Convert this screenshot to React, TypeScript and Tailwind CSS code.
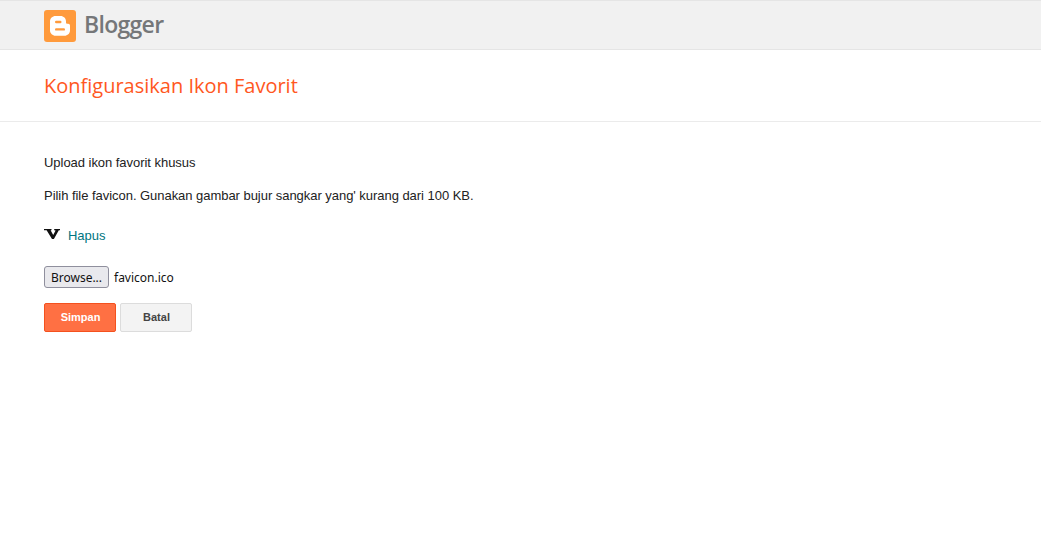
export default function App() {
  return (
    <div className="min-h-[554px] bg-white font-['Liberation_Sans',Arial,sans-serif] text-[13px] tracking-[-0.04px] text-[#222]">
      {/* Header */}
      <div className="flex h-[50px] items-center gap-[8px] border-y border-[#e5e5e5] bg-[#f1f1f1] pt-px pl-[44px]">
        <svg width="32" height="32" viewBox="0 0 32 32" className="shrink-0">
          <rect width="32" height="32" rx="3" fill="#ff9a3c" />
          <path
            d="M11.5 6h5c3.2 0 5.5 2.3 5.5 5.2v1.3c0 .8.6 1.3 1.3 1.3h.9c1 0 1.8.7 1.8 1.7v4.7c0 3.2-2.5 5.5-5.5 5.5h-8.9c-3 0-5.6-2.4-5.6-5.5v-8.9c0-3 2.5-5.3 5.5-5.3z"
            fill="#fff"
          />
          <rect x="11" y="10.8" width="6.5" height="2.4" rx="1.2" fill="#ff9a3c" />
          <rect x="11" y="18.2" width="10" height="2.4" rx="1.2" fill="#ff9a3c" />
        </svg>
        <span className="-translate-y-px font-['Open_Sans',sans-serif] text-[23px] leading-none font-semibold tracking-[-0.7px] text-[#757779]">
          Blogger
        </span>
      </div>

      {/* Title */}
      <div className="flex h-[72px] items-center border-b border-[#ebebeb] pl-[44px]">
        <h1 className="font-['Open_Sans',sans-serif] text-[20px] font-normal tracking-normal text-[#ff5722]">
          Konfigurasikan Ikon Favorit
        </h1>
      </div>

      {/* Form */}
      <div className="flex flex-col items-start pt-[33px] pl-[44px]">
        <p className="leading-[16px]">Upload ikon favorit khusus</p>
        <p className="mt-[17px] leading-[16px]">
          Pilih file favicon. Gunakan gambar bujur sangkar yang' kurang dari 100 KB.
        </p>

        <div className="mt-[24px] flex h-[16px] items-center gap-[8px]">
          <svg width="16" height="16" viewBox="0 0 16 16" className="shrink-0 -translate-y-[2px]">
            <path d="M0 3h7.5v1.3H6.6l2.6 4.6 2.4-4.4-1.4-.2V3H16v1.3h-1.2L9.9 13H8L2.6 4.3H0z" fill="#111" />
          </svg>
          <a className="text-[#00757f]">Hapus</a>
        </div>

        <div className="mt-[22px] flex items-center gap-[5px]">
          <button className="h-[22px] w-[65px] rounded-[3px] border border-[#8f8f9d] bg-[#e9e9ed] pt-[2px] font-['Noto_Sans',sans-serif] text-[12px] leading-none tracking-normal text-[#111]">
            Browse...
          </button>
          <span className="translate-y-px font-['Noto_Sans',sans-serif] text-[12px] tracking-normal text-[#111]">favicon.ico</span>
        </div>

        <div className="mt-[15px] flex gap-[4px]">
          <button className="h-[29px] w-[72px] rounded-[2px] border border-[#f4511e] bg-[#ff7043] pl-px text-[11px] font-bold tracking-normal text-white">
            Simpan
          </button>
          <button className="h-[29px] w-[72px] rounded-[2px] border border-[#dcdcdc] bg-[#f3f3f3] pl-px text-[11px] font-bold tracking-normal text-[#444]">
            Batal
          </button>
        </div>
      </div>
    </div>
  );
}
